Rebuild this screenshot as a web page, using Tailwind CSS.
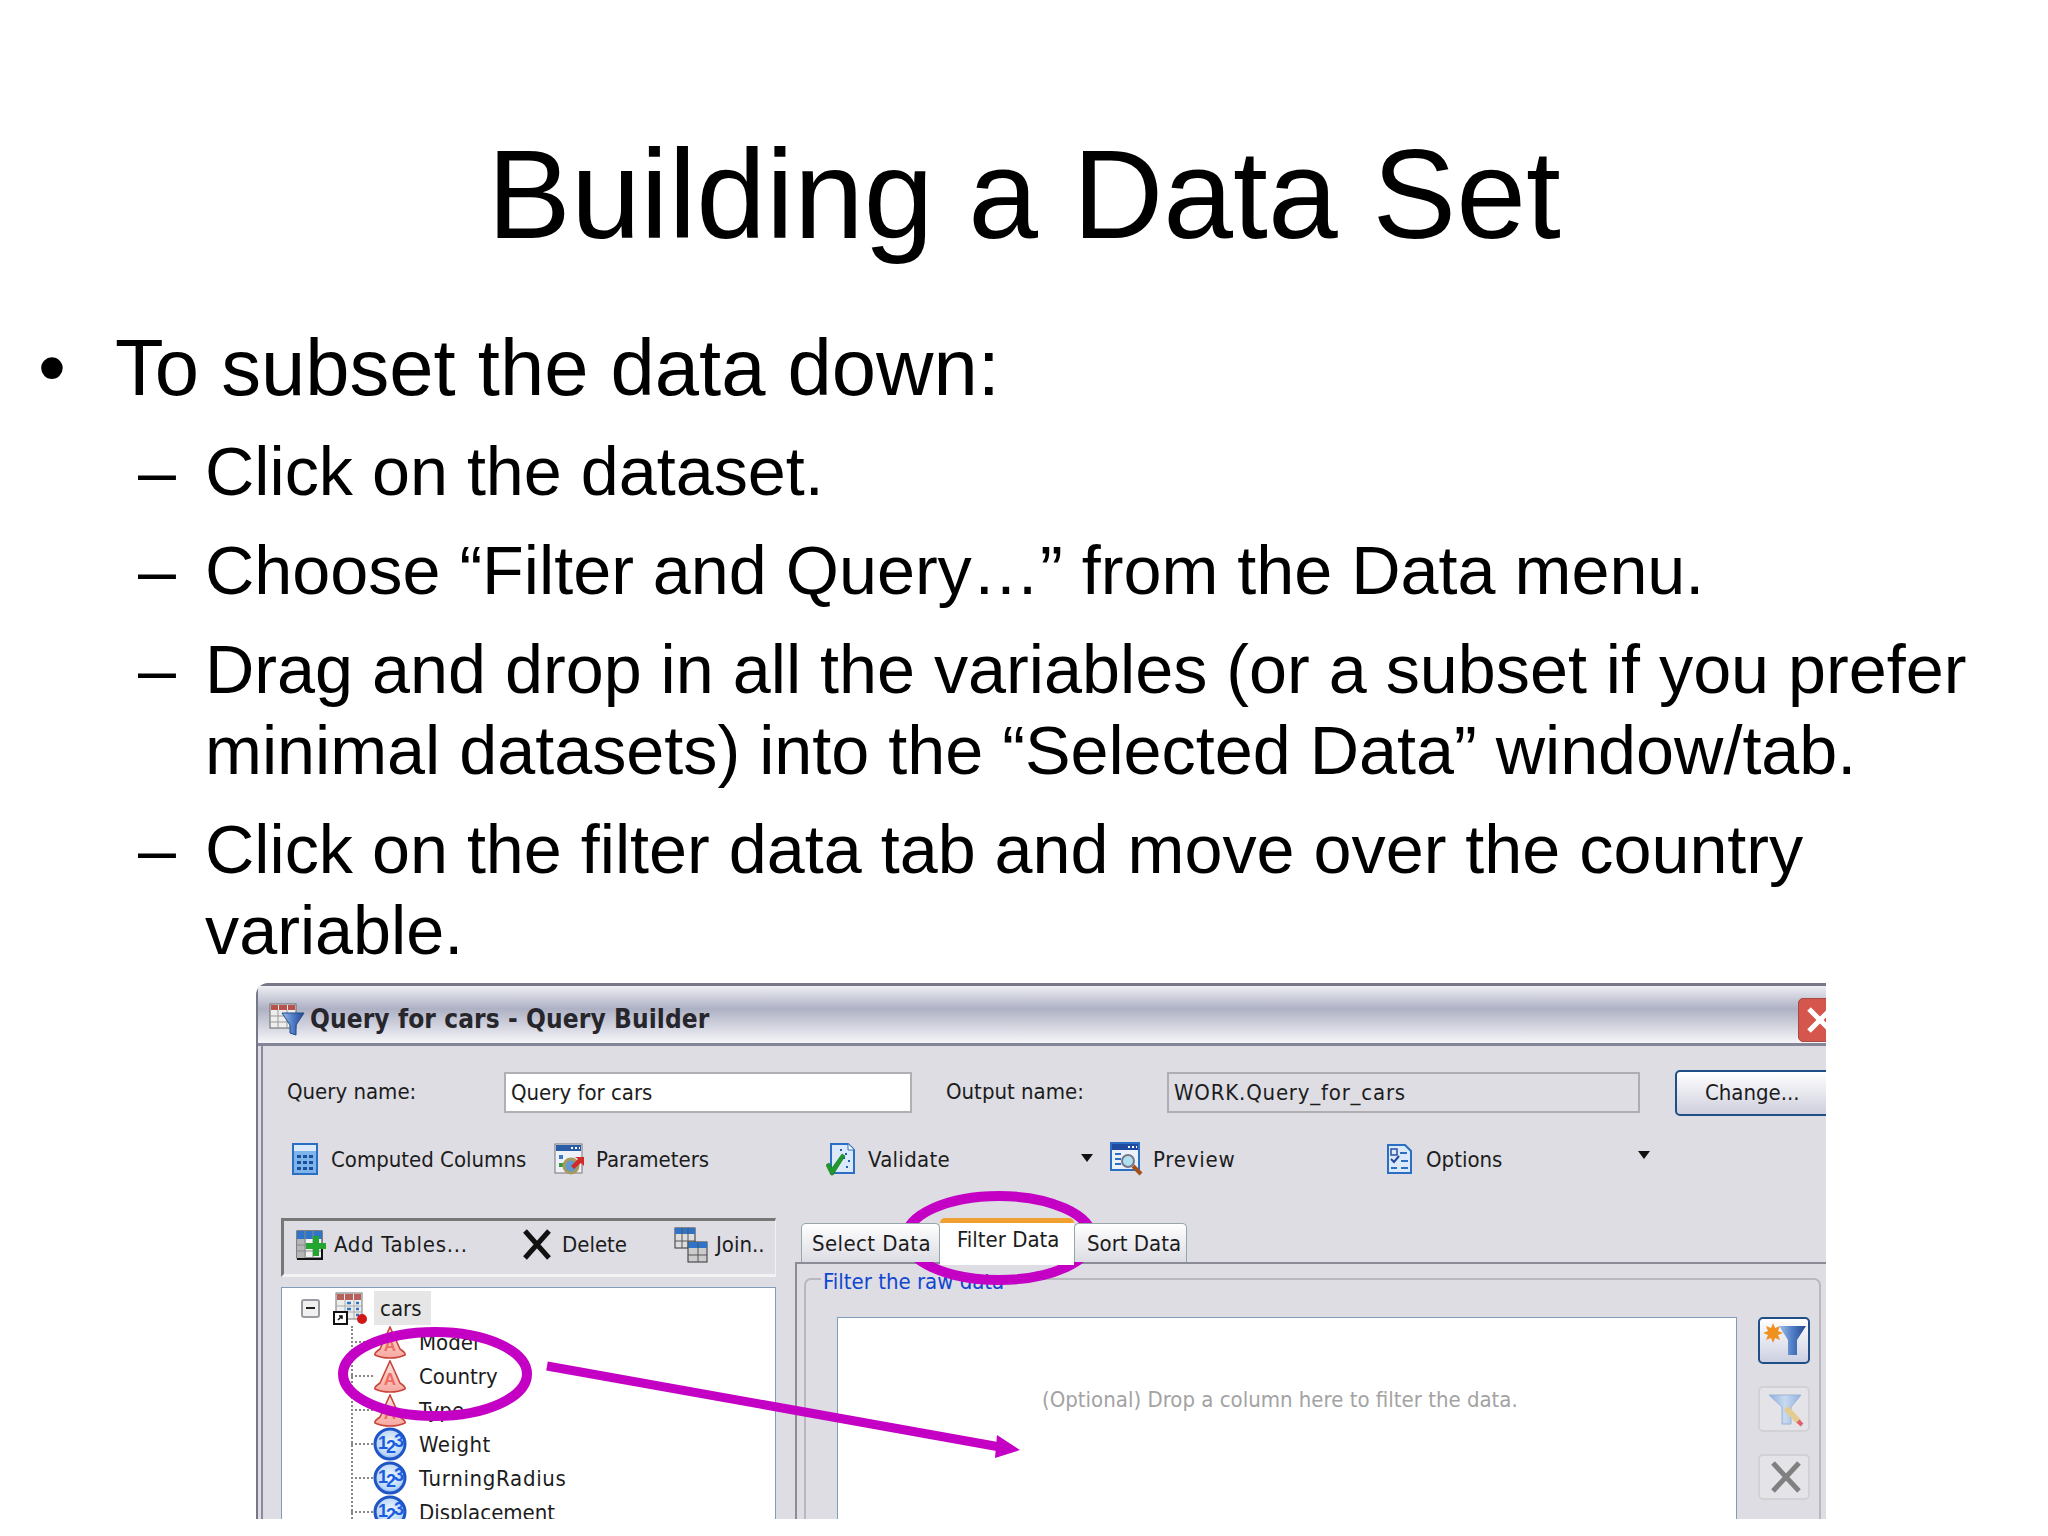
<!DOCTYPE html>
<html lang="en">
<head>
    <meta charset="UTF-8">
    <title>Building a Data Set</title>
    <script src="https://cdn.jsdelivr.net/npm/@tailwindcss/browser@4"></script>
</head>
<body class="relative w-[2048px] h-[1536px] overflow-hidden bg-white text-black font-['Liberation_Sans',Arial,sans-serif]">

    <!-- shared icon parts -->
    <svg class="absolute w-0 h-0">
        <defs>
            <linearGradient id="funnel" x1="0" x2="1" y1="0" y2="0"><stop offset="0" stop-color="#9fc0ea"/><stop offset="0.5" stop-color="#4f7cc6"/><stop offset="1" stop-color="#27488e"/></linearGradient>
            <linearGradient id="funnelPale" x1="0" x2="1" y1="0" y2="0"><stop offset="0" stop-color="#8fb0de"/><stop offset="0.5" stop-color="#c8daf0"/><stop offset="1" stop-color="#8fb0de"/></linearGradient>
            <radialGradient id="ball" cx="0.5" cy="0.45" r="0.6"><stop offset="0" stop-color="#f2f8ff"/><stop offset="0.7" stop-color="#bcd8f8"/><stop offset="1" stop-color="#5f9cec"/></radialGradient>
            <linearGradient id="cone" x1="0" x2="0" y1="0" y2="1"><stop offset="0" stop-color="#fbe4e0"/><stop offset="1" stop-color="#f6a8a0"/></linearGradient>
            <symbol id="charCol" viewBox="0 0 34 33">
                <path d="M17 1L27 23q6 4 5 6-6 3-15 3T2 29q-1-2 5-6z" fill="url(#cone)" stroke="#c8443a" stroke-width="1.6"/>
                <text x="17" y="25" text-anchor="middle" font-size="17" font-weight="700" fill="#ee6c62" font-family="Liberation Sans">A</text>
            </symbol>
            <symbol id="numCol" viewBox="0 0 34 34">
                <circle cx="17" cy="17" r="15" fill="url(#ball)" stroke="#1f55c4" stroke-width="3"/>
                <text font-size="18" font-weight="700" fill="#1a5ce0" font-family="Liberation Sans"><tspan x="5" y="22">1</tspan><tspan x="13" y="26">2</tspan><tspan x="21" y="20">3</tspan></text>
            </symbol>
        </defs>
    </svg>

    <h1 class="pt-[132px] text-center text-[125.4px] leading-[125px]">Building a Data Set</h1>

    <div class="mt-[65px] flex text-[79.6px] leading-[91px]">
        <span class="w-[115px] pl-[38px]">•</span>
        <span>To subset the data down:</span>
    </div>

    <ul class="mt-[18px] flex flex-col gap-[18px] text-[68.3px] leading-[81px]">
        <li class="flex"><span class="w-[205px] pl-[138px] shrink-0">–</span><span class="w-[1800px]">Click on the dataset.</span></li>
        <li class="flex"><span class="w-[205px] pl-[138px] shrink-0">–</span><span class="w-[1800px]">Choose “Filter and Query…” from the Data menu.</span></li>
        <li class="flex"><span class="w-[205px] pl-[138px] shrink-0">–</span><span class="w-[1800px]">Drag and drop in all the variables (or a subset if you prefer minimal datasets) into the “Selected Data” window/tab.</span></li>
        <li class="flex"><span class="w-[205px] pl-[138px] shrink-0">–</span><span class="w-[1800px]">Click on the filter data tab and move over the country variable.</span></li>
    </ul>

    <!-- screenshot of the query builder, cropped right and bottom -->
    <div class="mt-[12px] ml-[256px] w-[1570px] h-[536px] overflow-hidden font-['DejaVu_Sans_Condensed','DejaVu_Sans',sans-serif] font-stretch-condensed text-[22px] text-[#1c1c1c]">
        <div class="w-[1642px] h-[580px] rounded-tl-[12px] border-l-[2px] border-t-[3px] border-[#77778a] bg-[#dddde3] flex flex-col">

            <!-- title bar -->
            <div class="h-[60px] shrink-0 flex items-center pl-[11px] pt-[10px] border-b-[3px] border-[#85859a] bg-gradient-to-b from-[#eeeef3] via-[#aeb1c4] via-40% to-[#f6f6f9]">
                <svg class="w-[36px] h-[33px]" viewBox="0 0 36 33">
                    <rect x="1" y="1" width="26" height="24" fill="#eee" stroke="#666"/>
                    <path d="M2 2h7v5H2zM10 2h8v5h-8zM19 2h7v5h-7z" fill="#b8504c"/>
                    <path d="M1 13h26M1 19h26M9 7v18M18 7v18" stroke="#999"/>
                    <path d="M13 10h22L27 22v10l-6-2v-8z" fill="url(#funnel)" stroke="#1c4a8c"/>
                </svg>
                <span class="ml-[5px] w-[400px] font-bold text-[26px] tracking-[0.1px] text-[#26262c] whitespace-nowrap">Query for cars - Query Builder</span>
                <div class="ml-[1088px] w-[44px] h-[44px] rounded-[5px] bg-[#d5564c] border border-[#a84a44] flex items-center justify-center">
                    <svg class="w-[32px] h-[32px]" viewBox="0 0 32 32"><path d="M5 5l22 22M27 5L5 27" stroke="#fff" stroke-width="5"/></svg>
                </div>
            </div>

            <div class="flex-1 min-h-0 ml-[3px] border-l-[2px] border-[#8a8a9c] flex flex-col">
                <!-- names row -->
                <div class="mt-[26px] h-[41px] shrink-0 flex items-center pl-[24px]">
                    <span class="w-[217px] pb-[3px]">Query name:</span>
                    <div class="w-[408px] h-[41px] bg-white border-2 border-[#b0b0b4] pl-[5px] flex items-center">Query for cars</div>
                    <span class="ml-[34px] w-[221px] pb-[3px]">Output name:</span>
                    <div class="w-[473px] h-[41px] border-2 border-[#aeaeb2] pl-[5px] flex items-center tracking-[0.8px]">WORK.Query_for_cars</div>
                    <div class="ml-[35px] w-[180px] h-[46px] rounded-[5px] border-2 border-[#1f4f86] bg-gradient-to-b from-white to-[#cfcfdd] pl-[28px] flex items-center">Change...</div>
                </div>

                <!-- action row -->
                <div class="mt-[30px] h-[32px] shrink-0 flex items-center pl-[29px]">
                    <div class="w-[262px] flex items-center">
                        <svg class="w-[26px] h-[32px]" viewBox="0 0 26 32">
                            <rect x="1" y="1" width="24" height="30" fill="#7fb4ea" stroke="#2a6fc4" stroke-width="2"/>
                            <rect x="2" y="2" width="22" height="6" fill="#dbe9f8"/>
                            <path d="M5 12h4v3H5zM11 12h4v3h-4zM17 12h4v3h-4zM5 18h4v3H5zM11 18h4v3h-4zM17 18h4v3h-4zM5 24h4v3H5zM11 24h4v3h-4zM17 24h4v3h-4z" fill="#1a4f9c"/>
                        </svg>
                        <span class="ml-[13px]">Computed Columns</span>
                    </div>
                    <div class="w-[272px] flex items-center">
                        <svg class="w-[31px] h-[32px]" viewBox="0 0 31 32">
                            <rect x="1" y="1" width="27" height="29" fill="#eef2f8" stroke="#777"/>
                            <rect x="2" y="2" width="25" height="6" fill="#2b5ca8"/>
                            <path d="M17 4h2v2h-2zM21 4h2v2h-2zM25 4h1v2h-1z" fill="#fff"/>
                            <path d="M5 12h4v4H5z" fill="#3f78c8"/>
                            <path d="M5 20h4v4H5z" fill="#3a9a3a"/>
                            <circle cx="17" cy="23" r="7" fill="#5f9ad0" stroke="#a89a5c" stroke-width="3"/>
                            <path d="M17 23l7-7-3-2h9v9l-3-3-7 6z" fill="#d02a2a"/>
                        </svg>
                        <span class="ml-[11px]">Parameters</span>
                    </div>
                    <div class="w-[284px] flex items-center relative">
                        <svg class="w-[29px] h-[33px]" viewBox="0 0 29 33">
                            <path d="M5 1h17l6 6v23H5z" fill="#dbe9fa" stroke="#2a6fc4" stroke-width="2"/>
                            <path d="M22 1v6h6" fill="#fff" stroke="#2a6fc4"/>
                            <path d="M14 6h2v2h-2zM19 10h2v2h-2zM22 17h2v2h-2zM20 23h2v2h-2zM17 14h2v2h-2z" fill="#1f5fb4"/>
                            <path d="M0 22l3-2 3 5 10-14 3 2-12 19h-2z" fill="#1d9a2a" stroke="#11701c" stroke-width="0.6"/>
                        </svg>
                        <span class="ml-[13px] tracking-[0.3px]">Validate</span>
                        <svg class="absolute left-[255px] top-[11px] w-[12px] h-[8px]" viewBox="0 0 12 8"><path d="M0 0h12L6 8z" fill="#111"/></svg>
                    </div>
                    <div class="w-[277px] flex items-center">
                        <svg class="w-[33px] h-[34px]" viewBox="0 0 33 34">
                            <rect x="1" y="1" width="28" height="27" fill="#eaf1fa" stroke="#2a6fc4" stroke-width="2"/>
                            <rect x="2" y="2" width="26" height="6" fill="#1f4aa0"/>
                            <path d="M18 4h2v2h-2zM22 4h2v2h-2zM26 4h1v2h-1z" fill="#fff"/>
                            <path d="M5 12h6M5 17h6M5 22h6" stroke="#2a6fc4" stroke-width="2"/>
                            <circle cx="18" cy="19" r="6" fill="#aee0f0" stroke="#778" stroke-width="2"/>
                            <path d="M23 24l8 8" stroke="#a5501c" stroke-width="4"/>
                        </svg>
                        <span class="ml-[10px] tracking-[0.8px]">Preview</span>
                    </div>
                    <div class="w-[273px] flex items-center relative">
                        <svg class="w-[25px] h-[30px]" viewBox="0 0 25 30">
                            <path d="M1 1h17l6 6v22H1z" fill="#dbe9fa" stroke="#2a6fc4" stroke-width="2"/>
                            <path d="M4 5h6v6H4z" fill="none" stroke="#2a50a4" stroke-width="1.5"/>
                            <path d="M4 15l3 3 5-6" fill="none" stroke="#22489c" stroke-width="2"/>
                            <path d="M13 9h7M14 17h7M14 24h7M4 24h6" stroke="#2a6fc4" stroke-width="2"/>
                        </svg>
                        <span class="ml-[14px]">Options</span>
                        <svg class="absolute left-[251px] top-[8px] w-[12px] h-[8px]" viewBox="0 0 12 8"><path d="M0 0h12L6 8z" fill="#111"/></svg>
                    </div>
                </div>

                <div class="mt-[43px] flex-1 min-h-0 flex">
                    <!-- left column -->
                    <div class="ml-[18px] w-[495px] shrink-0 flex flex-col">
                        <div class="h-[59px] shrink-0 flex items-center pb-[6px] border-t-[3px] border-l-[3px] border-r border-b-[3px] border-t-[#777] border-l-[#777] border-r-[#f2f2f4] border-b-[#f2f2f4]">
                            <div class="w-[223px] pl-[12px] flex items-center">
                                <svg class="w-[31px] h-[32px]" viewBox="0 0 31 32">
                                    <rect x="1" y="2" width="25" height="27" fill="#f2f2f2" stroke="#222"/>
                                    <rect x="1" y="2" width="25" height="8" fill="#2f74c8"/>
                                    <path d="M1 2h9v27H1z" fill="#b4b4b4"/>
                                    <path d="M1 2h25v8H1z" fill="#2f74c8"/>
                                    <path d="M1 16h25M1 22h25M9 2v27M17 2v27" stroke="#8a8a8a"/>
                                    <path d="M26 20v10H1" fill="none" stroke="#111" stroke-width="2"/>
                                    <path d="M17 7h6v7h7v6h-7v7h-6v-7h-7v-6h7z" fill="#22a62f"/>
                                </svg>
                                <span class="ml-[7px] tracking-[0.7px]">Add Tables...</span>
                            </div>
                            <div class="w-[167px] pl-[15px] flex items-center">
                                <svg class="w-[30px] h-[32px]" viewBox="0 0 30 32"><path d="M3 2l24 27M27 2L3 29" stroke="#111" stroke-width="5"/></svg>
                                <span class="ml-[10px]">Delete</span>
                            </div>
                            <div class="flex items-center">
                                <svg class="w-[34px] h-[36px]" viewBox="0 0 34 36">
                                    <rect x="1" y="1" width="20" height="20" fill="#ddd" stroke="#333"/>
                                    <rect x="1" y="1" width="20" height="6" fill="#2f74c8"/>
                                    <rect x="14" y="15" width="19" height="20" fill="#ccc" stroke="#333"/>
                                    <rect x="14" y="15" width="19" height="6" fill="#2f74c8"/>
                                    <path d="M1 14h20M8 1v20M14 1v20M14 28h19M24 15v20" stroke="#555"/>
                                </svg>
                                <span class="ml-[8px]">Join..</span>
                            </div>
                        </div>

                        <div class="relative mt-[10px] flex-1 min-h-0 bg-white border border-[#7f9db9] overflow-hidden">
                            <div class="absolute left-[69px] top-[38px] h-[200px] border-l-2 border-dotted border-[#888]"></div>
                            <div class="flex items-center h-[34px] mt-[3px] pl-[19px]">
                                <div class="w-[19px] h-[19px] rounded-[3px] border-2 border-[#9a9aa0] bg-[#f0f0f0] flex items-center justify-center"><div class="w-[9px] h-[2px] bg-[#222]"></div></div>
                                <svg class="ml-[13px] w-[35px] h-[33px]" viewBox="0 0 35 33">
                                    <rect x="3" y="1" width="26" height="26" fill="#eee" stroke="#777"/>
                                    <path d="M4 2h7v6H4zM12 2h8v6h-8zM21 2h7v6h-7z" fill="#b8605c"/>
                                    <path d="M3 14h26M3 20h26M12 8v19M21 8v19" stroke="#aaa"/>
                                    <path d="M14 11h4M23 11h3M14 17h4M23 17h3M23 23h3" stroke="#2f74c8" stroke-width="2.5"/>
                                    <rect x="1" y="20" width="13" height="12" fill="#fff" stroke="#111" stroke-width="2"/>
                                    <path d="M5 28l4-4M6 24h3v3" stroke="#111" stroke-width="1.5" fill="none"/>
                                    <circle cx="29" cy="27" r="5" fill="#d01818"/>
                                </svg>
                                <span class="ml-[6px] w-[57px] h-[34px] bg-[#e6e6e6] pl-[6px] flex items-center">cars</span>
                            </div>
                            <div class="flex flex-col">
                                <div class="flex items-center h-[34px]">
                                    <div class="ml-[69px] w-[22px] border-t-2 border-dotted border-[#888]"></div>
                                    <svg class="w-[34px] h-[33px]"><use href="#charCol"/></svg>
                                    <span class="ml-[12px]">Model</span>
                                </div>
                                <div class="flex items-center h-[34px]">
                                    <div class="ml-[69px] w-[22px] border-t-2 border-dotted border-[#888]"></div>
                                    <svg class="w-[34px] h-[33px]"><use href="#charCol"/></svg>
                                    <span class="ml-[12px]">Country</span>
                                </div>
                                <div class="flex items-center h-[34px]">
                                    <div class="ml-[69px] w-[22px] border-t-2 border-dotted border-[#888]"></div>
                                    <svg class="w-[34px] h-[33px]"><use href="#charCol"/></svg>
                                    <span class="ml-[12px]">Type</span>
                                </div>
                                <div class="flex items-center h-[34px]">
                                    <div class="ml-[69px] w-[22px] border-t-2 border-dotted border-[#888]"></div>
                                    <svg class="w-[34px] h-[34px]"><use href="#numCol"/></svg>
                                    <span class="ml-[12px] tracking-[0.5px]">Weight</span>
                                </div>
                                <div class="flex items-center h-[34px]">
                                    <div class="ml-[69px] w-[22px] border-t-2 border-dotted border-[#888]"></div>
                                    <svg class="w-[34px] h-[34px]"><use href="#numCol"/></svg>
                                    <span class="ml-[12px] tracking-[0.7px]">TurningRadius</span>
                                </div>
                                <div class="flex items-center h-[34px]">
                                    <div class="ml-[69px] w-[22px] border-t-2 border-dotted border-[#888]"></div>
                                    <svg class="w-[34px] h-[34px]"><use href="#numCol"/></svg>
                                    <span class="ml-[12px]">Displacement</span>
                                </div>
                            </div>
                        </div>
                    </div>

                    <!-- right column -->
                    <div class="ml-[19px] flex-1 flex flex-col min-w-0">
                        <div class="h-[44px] shrink-0 flex items-end pl-[6px] relative z-10">
                            <div class="w-[139px] h-[39px] rounded-t-[5px] border border-b-0 border-[#97a7a8] bg-gradient-to-b from-white to-[#dcdce4] pl-[10px] flex items-center tracking-[0.4px]">Select Data</div>
                            <div class="w-[134px] h-[47px] -mb-[3px] rounded-t-[5px] bg-white border-t-[5px] border-[#f0a030] pl-[17px] pb-[10px] flex items-center">Filter Data</div>
                            <div class="w-[113px] h-[39px] rounded-t-[5px] border border-b-0 border-[#97a7a8] bg-gradient-to-b from-white to-[#dcdce4] pl-[12px] flex items-center">Sort Data</div>
                        </div>
                        <div class="flex-1 min-h-0 border-t-2 border-l-2 border-[#8c8c96] pl-[7px] pt-[14px]">
                            <div class="relative w-[1017px] h-[400px] rounded-t-[7px] border-2 border-[#b8b8be] flex pl-[31px] pt-[37px]">
                                <span class="absolute left-[15px] -top-[15px] bg-[#dddde3] px-[2px] text-[#1046d0]">Filter the raw data</span>
                                <div class="w-[900px] h-[300px] bg-white border border-[#7f9db9] pt-[65px] pl-[204px] text-[#a3a3a3]">(Optional) Drop a column here to filter the data.</div>
                                <div class="ml-[21px] w-[52px] flex flex-col gap-[22px]">
                                    <div class="h-[47px] rounded-[5px] border-2 border-[#1f4f86] bg-gradient-to-b from-white to-[#cdd0e2]">
                                        <svg class="w-[48px] h-[43px]" viewBox="0 0 48 43">
                                            <path d="M13 4l2 5 5-2-2 5 5 2-5 2 2 5-5-2-2 5-2-5-5 2 2-5-5-2 5-2-2-5 5 2z" fill="#f09020"/>
                                            <path d="M19 7h27l-9 14v15h-9V21z" fill="url(#funnel)"/>
                                        </svg>
                                    </div>
                                    <div class="h-[46px] rounded-[5px] border-2 border-[#d2d2d6] bg-[#e4e4e8]">
                                        <svg class="w-[48px] h-[42px]" viewBox="0 0 48 42">
                                            <path d="M9 7h32l-10 12v17h-9V19z" fill="url(#funnelPale)" stroke="#9ab4d8"/>
                                            <path d="M26 20l13 14" stroke="#e4cc90" stroke-width="6"/>
                                            <path d="M38 33l4 4" stroke="#e06070" stroke-width="4"/>
                                        </svg>
                                    </div>
                                    <div class="h-[46px] rounded-[5px] border-2 border-[#d2d2d6] bg-[#e4e4e8]">
                                        <svg class="w-[48px] h-[42px]" viewBox="0 0 48 42"><path d="M13 7l26 28M39 7L13 35" stroke="#808080" stroke-width="5"/></svg>
                                    </div>
                                </div>
                            </div>
                        </div>
                    </div>
                </div>
            </div>
        </div>
    </div>

    <!-- callouts drawn over the slide -->
    <svg class="absolute left-0 top-0 w-[2048px] h-[1536px] pointer-events-none" viewBox="0 0 2048 1536">
        <ellipse cx="435" cy="1374" rx="92" ry="42" fill="none" stroke="#c400c4" stroke-width="10"/>
        <ellipse cx="999" cy="1238" rx="93" ry="42" fill="none" stroke="#c400c4" stroke-width="10"/>
        <path d="M547 1366L1000 1447" stroke="#c400c4" stroke-width="9"/>
        <path d="M997 1435L1020 1450L995 1458Z" fill="#c400c4"/>
    </svg>
</body>
</html>
